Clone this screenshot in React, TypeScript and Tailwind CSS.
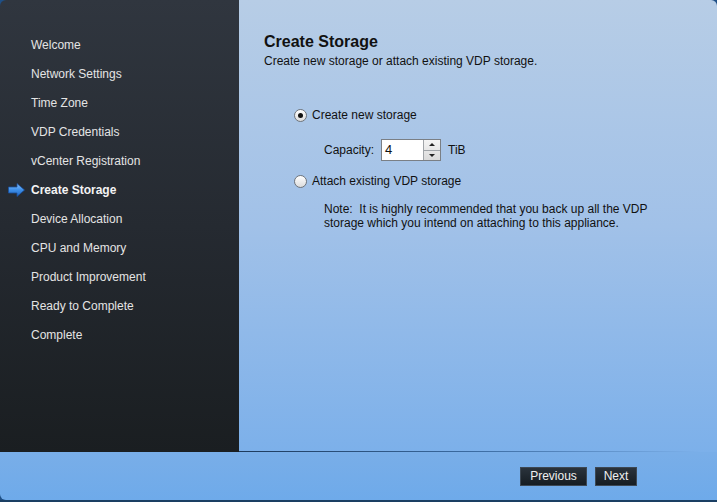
import React from "react";

const steps = [
  "Welcome",
  "Network Settings",
  "Time Zone",
  "VDP Credentials",
  "vCenter Registration",
  "Create Storage",
  "Device Allocation",
  "CPU and Memory",
  "Product Improvement",
  "Ready to Complete",
  "Complete",
];

function Arrow() {
  return (
    <svg width="17" height="14" viewBox="0 0 17 14">
      <defs>
        <linearGradient id="ag" x1="0" y1="0" x2="0" y2="1">
          <stop offset="0" stopColor="#8cc4ff" />
          <stop offset="0.5" stopColor="#3d8fe8" />
          <stop offset="1" stopColor="#1f63c0" />
        </linearGradient>
      </defs>
      <path d="M0.5 4 H9 V0.5 L16.5 7 L9 13.5 V10 H0.5 Z" fill="url(#ag)" stroke="#1a4f9a" strokeWidth="0.8" />
    </svg>
  );
}

function Radio({ checked }: { checked?: boolean }) {
  return (
    <span className="w-[13px] h-[13px] rounded-full border border-[#6f747a] bg-gradient-to-b from-[#ffffff] to-[#dcdcdc] flex items-center justify-center shrink-0">
      {checked && <span className="w-[5px] h-[5px] rounded-full bg-[#111]" />}
    </span>
  );
}

export default function App() {
  return (
    <div
      className="w-[717px] h-[502px] bg-[#1e4f86] overflow-hidden flex flex-col"
      style={{ fontFamily: '"Liberation Sans", Arial, sans-serif' }}
    >
      <div className="flex h-[452px]">
        <div className="w-[239px] rounded-tl-[6px] bg-gradient-to-b from-[#30363f] via-[#252a31] to-[#1a1e21] pt-[30px]">
          {steps.map((s) => {
            const active = s === "Create Storage";
            return (
              <div key={s} className="h-[29px] flex items-center relative">
                {active && (
                  <span className="absolute left-[8px] top-[8px]">
                    <Arrow />
                  </span>
                )}
                <span
                  className={
                    "pl-[31px] text-[12px] " +
                    (active ? "font-bold text-[#f4f4f4]" : "text-[#e4e4e4]")
                  }
                >
                  {s}
                </span>
              </div>
            );
          })}
        </div>
        <div className="flex-1 rounded-tr-[6px] bg-gradient-to-b from-[#b7cde6] via-[#a1c1e8] to-[#7cb0ea] pl-[25px] pt-[33px] text-[#111]">
          <div className="text-[16px] font-bold leading-[18px]">Create Storage</div>
          <div className="text-[12px] leading-[14px] mt-[3px]">
            Create new storage or attach existing VDP storage.
          </div>
          <div className="pl-[30px] pt-[39px]">
            <div className="flex items-center gap-[5px] h-[16px] text-[12px]">
              <Radio checked />
              <span>Create new storage</span>
            </div>
            <div className="flex items-center pl-[30px] mt-[16px] h-[22px] text-[12px]">
              <span className="mr-[7px]">Capacity:</span>
              <div className="flex h-[22px] w-[60px] border border-[#7a7f85] bg-white">
                <div className="flex-1 pl-[3px] flex items-center text-[13px]">4</div>
                <div className="w-[17px] border-l border-[#a0a4a8] flex flex-col bg-gradient-to-b from-[#f4f4f4] to-[#dadada]">
                  <div className="flex-1 flex items-center justify-center border-b border-[#a0a4a8]">
                    <span className="w-0 h-0 border-l-[3px] border-r-[3px] border-b-[3px] border-l-transparent border-r-transparent border-b-[#222]" />
                  </div>
                  <div className="flex-1 flex items-center justify-center">
                    <span className="w-0 h-0 border-l-[3px] border-r-[3px] border-t-[3px] border-l-transparent border-r-transparent border-t-[#222]" />
                  </div>
                </div>
              </div>
              <span className="ml-[7px]">TiB</span>
            </div>
            <div className="flex items-center gap-[5px] h-[16px] mt-[12px] text-[12px]">
              <Radio />
              <span>Attach existing VDP storage</span>
            </div>
            <div className="pl-[30px] mt-[13px] text-[12px] leading-[14px] w-[390px]">
              Note:&nbsp; It is highly recommended that you back up all the VDP storage which you intend on attaching to this appliance.
            </div>
          </div>
        </div>
      </div>
      <div className="h-[48px] rounded-bl-[6px] bg-gradient-to-b from-[#79aee8] to-[#6eaaea] relative flex items-start justify-end pr-[80px] pt-[15px] gap-[8px]">
        <div className="absolute left-[239px] top-[-1px] w-[460px] h-[1px] bg-gradient-to-r from-[#1d3a5c] via-[#3a6aa0] to-transparent" />
        <button className="h-[19px] w-[67px] bg-gradient-to-b from-[#2a333c] to-[#161d23] border border-[#3d4854] text-[12px] text-[#f0f0f0] leading-[17px]">
          Previous
        </button>
        <button className="h-[19px] w-[42px] bg-gradient-to-b from-[#2a333c] to-[#161d23] border border-[#3d4854] text-[12px] text-[#f0f0f0] leading-[17px]">
          Next
        </button>
      </div>
      <div className="flex-1 bg-[#1a3f63]" />
    </div>
  );
}
